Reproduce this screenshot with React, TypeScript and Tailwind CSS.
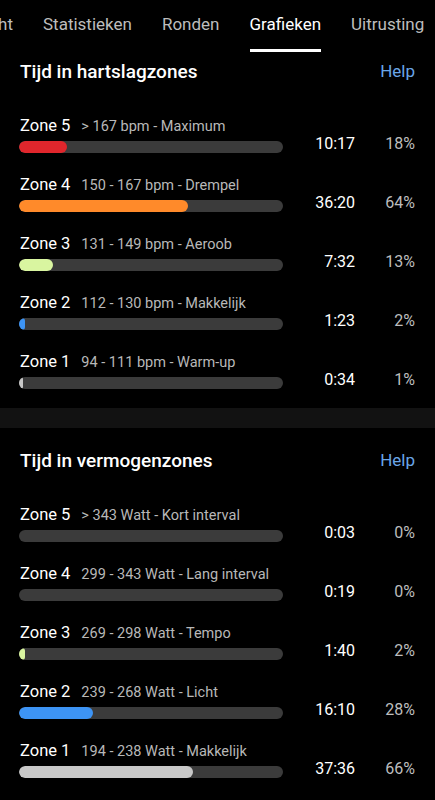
import React from 'react';

type Zone = {
  name: string;
  range: string;
  time: string;
  pct: number;
  color: string;
  minW?: number;
};

const hrZones: Zone[] = [
  { name: 'Zone 5', range: '> 167 bpm - Maximum', time: '10:17', pct: 18, color: 'bg-[#e0262c]' },
  { name: 'Zone 4', range: '150 - 167 bpm - Drempel', time: '36:20', pct: 64, color: 'bg-[#ff8a2a]' },
  { name: 'Zone 3', range: '131 - 149 bpm - Aeroob', time: '7:32', pct: 13, color: 'bg-[#d9f5a0]' },
  { name: 'Zone 2', range: '112 - 130 bpm - Makkelijk', time: '1:23', pct: 2, color: 'bg-[#3d94f5]' },
  { name: 'Zone 1', range: '94 - 111 bpm - Warm-up', time: '0:34', pct: 1, color: 'bg-[#c8c8c8]', minW: 4 },
];

const powerZones: Zone[] = [
  { name: 'Zone 5', range: '> 343 Watt - Kort interval', time: '0:03', pct: 0, color: 'bg-[#e0262c]' },
  { name: 'Zone 4', range: '299 - 343 Watt - Lang interval', time: '0:19', pct: 0, color: 'bg-[#ff8a2a]' },
  { name: 'Zone 3', range: '269 - 298 Watt - Tempo', time: '1:40', pct: 2, color: 'bg-[#d9f5a0]' },
  { name: 'Zone 2', range: '239 - 268 Watt - Licht', time: '16:10', pct: 28, color: 'bg-[#3d94f5]' },
  { name: 'Zone 1', range: '194 - 238 Watt - Makkelijk', time: '37:36', pct: 66, color: 'bg-[#c8c8c8]' },
];

const tabs = ['Overzicht', 'Statistieken', 'Ronden', 'Grafieken', 'Uitrusting'];

const BAR_W = 264;

const ZoneRow = ({ zone }: { zone: Zone }) => {
  // bar fill follows the percentage, with a small visible stub for tiny values
  const w = zone.pct === 0 ? 0 : Math.max((zone.pct / 100) * BAR_W, zone.minW ?? 6);
  return (
    <div className="flex h-[38px]">
      <div className="flex flex-col w-[264px]">
        <div className="flex items-baseline h-[22px] leading-[22px] pl-px whitespace-nowrap">
          <span className="text-[16.5px] text-white">{zone.name}</span>
          <span className="ml-[11px] text-[14.5px] text-[#b8b8b8]">{zone.range}</span>
        </div>
        <div className="mt-[4px] h-[12px] rounded-full bg-[#3b3b3b] overflow-hidden">
          {w > 0 && <div className={`h-full rounded-full ${zone.color}`} style={{ width: w }} />}
        </div>
      </div>
      <div className="flex flex-1 pt-[19px]">
        <div className="w-[72px] h-[20px] leading-[20px] text-right text-[16px] text-white">{zone.time}</div>
        <div className="flex-1 h-[20px] leading-[20px] text-right text-[16px] text-[#bdbdbd]">{zone.pct}%</div>
      </div>
    </div>
  );
};

const Section = ({ title, zones }: { title: string; zones: Zone[] }) => (
  <div className="pl-[19px] pr-5">
    <div className="flex items-center justify-between h-[28px] pl-px">
      <span className="text-[19px] font-medium text-white">{title}</span>
      <span className="text-[17px] text-[#6aa6e8]">Help</span>
    </div>
    <div className="flex flex-col gap-[21px] mt-[29px]">
      {zones.map((z) => (
        <ZoneRow key={z.name} zone={z} />
      ))}
    </div>
  </div>
);

export default function App() {
  return (
    <div className="w-[435px] h-[800px] overflow-hidden bg-black" style={{ fontFamily: 'Roboto, "Noto Sans", sans-serif' }}>
      <div className="h-[52px] overflow-hidden">
        <div className="flex gap-[30px] ml-[-58px] whitespace-nowrap">
          {tabs.map((t) => (
            <div key={t} className="flex flex-col">
              <span className={`h-[48px] pt-[12px] leading-[24px] text-[17px] ${t === 'Grafieken' ? 'text-white' : 'text-[#bdbdbd]'}`}>{t}</span>
              <div className={`h-[3px] mt-px ${t === 'Grafieken' ? 'bg-white' : ''}`} />
            </div>
          ))}
        </div>
      </div>
      <div className="pt-[6px] pb-[19px]">
        <Section title="Tijd in hartslagzones" zones={hrZones} />
      </div>
      <div className="h-[20px] bg-[#121212]" />
      <div className="pt-[19px]">
        <Section title="Tijd in vermogenzones" zones={powerZones} />
      </div>
    </div>
  );
}
